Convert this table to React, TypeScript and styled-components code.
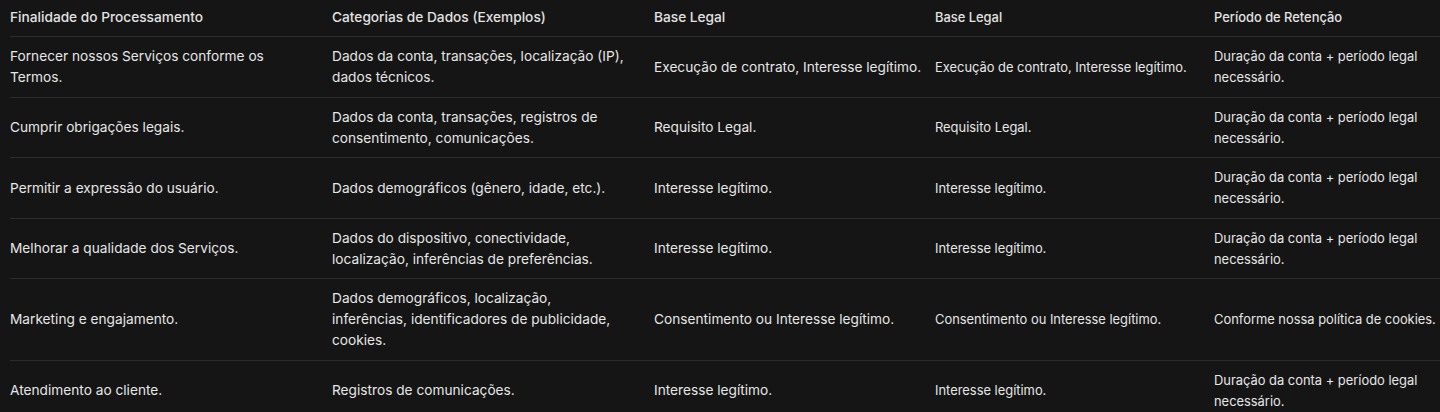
import React from 'react';
import styled, { createGlobalStyle } from 'styled-components';

const GlobalStyle = createGlobalStyle`
  html, body {
    margin: 0;
    padding: 0;
    background: #151515;
  }
  body {
    font-family: Inter, "Noto Sans", "Liberation Sans", sans-serif;
    -webkit-font-smoothing: antialiased;
  }
`;

const rows = [
  {
    purpose: 'Fornecer nossos Serviços conforme os Termos.',
    data: 'Dados da conta, transações, localização (IP), dados técnicos.',
    basis: 'Execução de contrato, Interesse legítimo.',
    retention: 'Duração da conta + período legal necessário.',
  },
  {
    purpose: 'Cumprir obrigações legais.',
    data: 'Dados da conta, transações, registros de consentimento, comunicações.',
    basis: 'Requisito Legal.',
    retention: 'Duração da conta + período legal necessário.',
  },
  {
    purpose: 'Permitir a expressão do usuário.',
    data: 'Dados demográficos (gênero, idade, etc.).',
    basis: 'Interesse legítimo.',
    retention: 'Duração da conta + período legal necessário.',
  },
  {
    purpose: 'Melhorar a qualidade dos Serviços.',
    data: 'Dados do dispositivo, conectividade, localização, inferências de preferências.',
    basis: 'Interesse legítimo.',
    retention: 'Duração da conta + período legal necessário.',
  },
  {
    purpose: 'Marketing e engajamento.',
    data: 'Dados demográficos, localização, inferências, identificadores de publicidade, cookies.',
    basis: 'Consentimento ou Interesse legítimo.',
    retention: 'Conforme nossa política de cookies.',
  },
  {
    purpose: 'Atendimento ao cliente.',
    data: 'Registros de comunicações.',
    basis: 'Interesse legítimo.',
    retention: 'Duração da conta + período legal necessário.',
  },
];

export default function App() {
  return (
    <Page>
      <GlobalStyle />
      <Table>
        <Row>
          <HeadCell>Finalidade do Processamento</HeadCell>
          <HeadCell>Categorias de Dados (Exemplos)</HeadCell>
          <HeadCell>Base Legal</HeadCell>
          <HeadCell $compact>Base Legal</HeadCell>
          <HeadCell $compact>Período de Retenção</HeadCell>
        </Row>
        {rows.map((r, i) => (
          <Row key={i}>
            <Cell>{r.purpose}</Cell>
            <Cell>{r.data}</Cell>
            <Cell $tight>{r.basis}</Cell>
            <Cell $compact>{r.basis}</Cell>
            <Cell $compact $tight>{r.retention}</Cell>
          </Row>
        ))}
      </Table>
    </Page>
  );
}

const Page = styled.div`
  width: 1440px;
  height: 412px;
  overflow: hidden;
  background: #151515;
  padding-left: 10px;
  box-sizing: border-box;
`;

const Table = styled.div`
  display: grid;
  grid-template-columns: 322px 322px 281px 279px 1fr;
`;

const Row = styled.div`
  display: contents;
`;

const HeadCell = styled.div<{ $compact?: boolean }>`
  display: flex;
  align-items: center;
  padding: 7px 16px 8px 0;
  font-size: ${(p) => (p.$compact ? '12.9px' : '13.7px')};
  line-height: 21px;
  font-weight: 500;
  color: #e2e2e2;
  border-bottom: 1px solid #2c2c2c;
`;

const Cell = styled.div<{ $compact?: boolean; $tight?: boolean }>`
  display: flex;
  align-items: center;
  padding: 9px ${(p) => (p.$tight ? '4px' : '27px')} 8.5px 0;
  font-size: ${(p) => (p.$compact ? '12.9px' : '13.7px')};
  line-height: 21px;
  font-weight: 400;
  color: #e6e6e6;
  border-bottom: 1px solid #2c2c2c;
`;
